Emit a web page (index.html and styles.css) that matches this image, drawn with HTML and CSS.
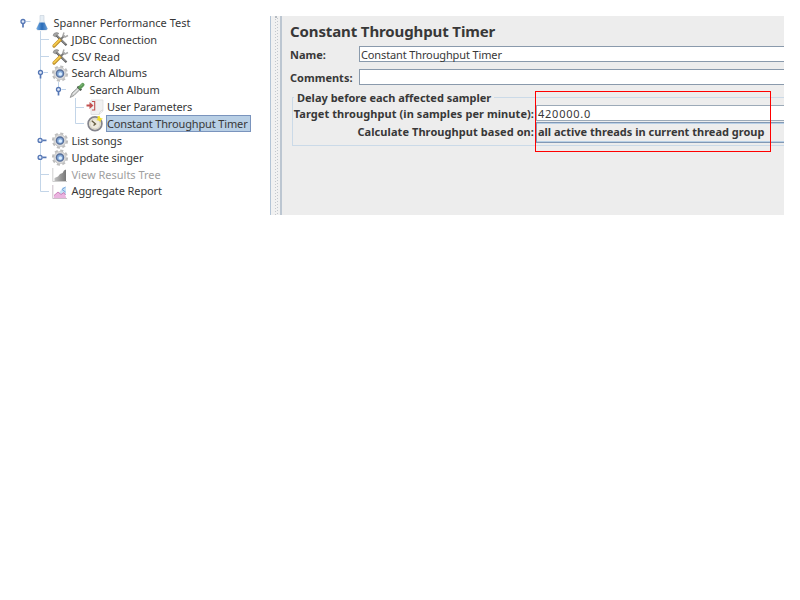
FILE: index.html
```html
<!DOCTYPE html>
<html lang="en">
<head>
<meta charset="utf-8">
<title>Spanner Performance Test</title>
<link rel="stylesheet" href="styles.css">
</head>
<body>
<svg class="defs" width="0" height="0">
  <defs>
    <linearGradient id="flaskFill" x1="0" x2="1"><stop offset="0" stop-color="#70a9e2"/><stop offset=".5" stop-color="#286bb8"/><stop offset="1" stop-color="#6a9ed5"/></linearGradient>
    <linearGradient id="chartFill" x1="0" x2="1"><stop offset="0" stop-color="#c0c0c0"/><stop offset="1" stop-color="#777"/></linearGradient>
    <g id="open"><path d="M0 9.5V13.500" stroke="#5577b5" stroke-width="1.700"/><circle cy="7.500" r="2" fill="#e4ecfa" stroke="#5577b5" stroke-width="1.300"/><path d="M3 7.500H7.500" stroke="#bfd2e8"/></g>
    <g id="closed"><path d="M2 8.400H6" stroke="#5577b5" stroke-width="1.700"/><circle cx="-.4" cy="8.400" r="2" fill="#e4ecfa" stroke="#5577b5" stroke-width="1.300"/></g>
    <g id="flask"><path d="M4 1.500V7L.8 14.200Q.5 16 2 16H10Q11.500 16 11.100 14.200L8 7V1.500Z" fill="#e6eef5" stroke="#c2ced9" stroke-width=".6"/><path d="M3.500 8.500H8.500L11.300 14.200Q11.600 15.900 10 15.900H2Q.5 15.900 .7 14.200Z" fill="url(#flaskFill)"/></g>
    <g id="tools"><path d="M4 4L14.500 14.300" stroke="#555" stroke-width="2.200"/><path d="M4 3.500L14 13.500" stroke="#ddd" stroke-width=".7"/><path d="M1 4.500Q1.500 1.500 5 1.500L7 2.500L4.500 4L3.500 6Z" fill="#a5a5a5" stroke="#777" stroke-width=".5"/><path d="M2 15L8.500 8.500" stroke="#b88924" stroke-width="3.200" stroke-linecap="round"/><path d="M2 14.600L8 8.600" stroke="#f5ca4c" stroke-width="1.900" stroke-linecap="round"/><path d="M8.500 8.500L12.500 4.500" stroke="#777" stroke-width="1.800"/><path d="M12 1.500L11 4.500L13 6L16 4.500" fill="none" stroke="#aaa" stroke-width="1.500"/></g>
    <g id="gear"><circle cx="8" cy="8.600" r="7.100" fill="none" stroke="#bdbdbd" stroke-width="2" stroke-dasharray="3.100 2.477"/><circle cx="8" cy="8.600" r="6.100" fill="#dadada" stroke="#bcbcbc" stroke-width=".7"/><circle cx="8" cy="8.600" r="3.600" fill="#83aada" stroke="#586f99" stroke-width="1.300"/><circle cx="8.300" cy="9" r="1.800" fill="#dceeff"/></g>
    <g id="dropper"><path d="M1.200 15.500L3 11L9.500 5L11.500 7L5 13.500Z" fill="#c9cccb" stroke="#8b8b8b" stroke-width=".8"/><path d="M4 12.300L9.500 7" stroke="#f5f5f5"/><path d="M8.500 4.500L12.300 8.300" stroke="#454d46" stroke-width="2"/><path d="M11 5.500L13.700 2.800" stroke="#5d9b58" stroke-width="3.700" stroke-linecap="round"/><path d="M11.500 4L13.500 2.200" stroke="#93c78a"/></g>
    <g id="params"><path d="M4 1H16V12L12 15.500H4Z" fill="#f1f1f1" stroke="#d8d8d8" stroke-width=".7"/><path d="M16 11Q13 11 12 15.500" fill="#fff" stroke="#c8c8c8" stroke-width=".7"/><path d="M-.5 5.500H2.500V3L6.500 6.500L2.500 10V7.500H-.500Z" fill="#c2504f"/><path d="M5 2.500H7.700V11H5" fill="none" stroke="#c2504f" stroke-width="1.100"/></g>
    <g id="clock"><circle cx="8" cy="8.800" r="6.900" fill="#eeeade" stroke="#84848c" stroke-width="1.700"/><circle cx="8" cy="8.800" r="5.100" fill="none" stroke="#ccc8b8" stroke-width=".7"/><path d="M4.800 5.800L8.500 9L6.500 10.500" fill="none" stroke="#655c40" stroke-width="1.300"/><path d="M12.500 .8L13.400 3L16 3.700L13.900 4.900L13.500 7.200L11.800 5.500L9.500 5.300L10.800 3.500L10.300 1.500Z" fill="#f4df28"/></g>
    <g id="results"><path d="M.8 2V15.500H15" fill="none" stroke="#c3c3c3" stroke-width=".8"/><path d="M2.500 15V12L6 10.500L8 8L10.500 7L12 4.500L14 3.500V15Z" fill="url(#chartFill)"/></g>
    <g id="report"><path d="M.8 2V15.500H15" fill="none" stroke="#bdaebb" stroke-width=".8"/><path d="M7 10L11 4H14V12H9Z" fill="#c7e2f5"/><path d="M2 15V12.500L6 9L9 11.500L12 9.500L14 14V15Z" fill="#eab3df"/><path d="M2 12.500L6 9L9 11.500L12 9.500L13.500 12" fill="none" stroke="#c56cae" stroke-width=".8"/><path d="M13.500 4L10 6.500L13.500 9" fill="none" stroke="#78a3dc"/></g>
  </defs>
</svg>
<main class="window">
  <nav class="tree">
    <div class="row"><svg class="gutter root" viewBox="16 0 37.500 17"><use href="#open" x="23"/><use href="#flask" x="36"/></svg><span class="wide">Spanner Performance Test</span></div>
    <div class="row"><svg class="gutter l1" viewBox="16 0 55.500 17"><path class="line" d="M40.500 0V17M40.500 8.500H49"/><use href="#tools" x="52"/></svg><span>JDBC Connection</span></div>
    <div class="row"><svg class="gutter l1" viewBox="16 0 55.500 17"><path class="line" d="M40.500 0V17M40.500 8.500H49"/><use href="#tools" x="52"/></svg><span class="wide">CSV Read</span></div>
    <div class="row"><svg class="gutter l1" viewBox="16 0 55.500 17"><path class="line" d="M40.500 0V17"/><use href="#open" x="40.500"/><use href="#gear" x="52"/></svg><span>Search Albums</span></div>
    <div class="row"><svg class="gutter l2" viewBox="16 0 73.500 17"><path class="line" d="M40.500 0V17M58.500 0V6"/><use href="#open" x="58.500"/><use href="#dropper" x="69"/></svg><span>Search Album</span></div>
    <div class="row"><svg class="gutter l3" viewBox="16 0 91 17"><path class="line" d="M40.500 0V17M75.500 -1V17M75.500 8.500H84"/><use href="#params" x="87"/></svg><span>User Parameters</span></div>
    <div class="row"><svg class="gutter l3" viewBox="16 0 91 17"><path class="line" d="M40.500 0V17M75.500 0V8.500H84"/><use href="#clock" x="87"/></svg><span class="selected">Constant Throughput Timer</span></div>
    <div class="row"><svg class="gutter l1" viewBox="16 0 55.500 17"><path class="line" d="M40.500 0V17"/><use href="#closed" x="40.500"/><use href="#gear" x="52"/></svg><span>List songs</span></div>
    <div class="row"><svg class="gutter l1" viewBox="16 0 55.500 17"><path class="line" d="M40.500 0V17"/><use href="#closed" x="40.500"/><use href="#gear" x="52"/></svg><span>Update singer</span></div>
    <div class="row"><svg class="gutter l1" viewBox="16 0 55.500 17"><path class="line" d="M40.500 0V17M40.500 8.500H49"/><use href="#results" x="52"/></svg><span class="wide disabled">View Results Tree</span></div>
    <div class="row"><svg class="gutter l1" viewBox="16 0 55.500 17"><path class="line" d="M40.500 0V8.500H49"/><use href="#report" x="52"/></svg><span>Aggregate Report</span></div>
  </nav>
  <div class="divider"></div>
  <section class="panel">
    <h1>Constant Throughput Timer</h1>
    <div class="field"><label>Name:</label><div class="input">Constant Throughput Timer</div></div>
    <div class="field"><label>Comments:</label><div class="input"></div></div>
    <div class="group">
      <div class="legend"><span>Delay before each affected sampler</span></div>
      <div class="setting target"><label>Target throughput (in samples per minute):</label><div class="value">420000.0</div></div>
      <div class="setting mode"><label>Calculate Throughput based on:</label><div class="combo">all active threads in current thread group</div></div>
      <div class="highlight"></div>
    </div>
  </section>
</main>
</body>
</html>
```
FILE: styles.css
```css
* { box-sizing: border-box; }
body { margin: 0; background: #fff; color: #383838; font: 11px/16px "Noto Sans", sans-serif; }
.defs { position: absolute; }
.window { display: flex; width: 768px; height: 199px; margin: 16px; }
.tree { width: 254px; margin-top: -1.5px; flex: none; }
.row { display: flex; height: 16.85px; align-items: center; white-space: nowrap; letter-spacing: -.1px; }
.wide { letter-spacing: 0; }
.gutter { height: 17px; overflow: visible; flex: none; }
.root { width: 37.5px; }
.l1 { width: 55.5px; }
.l2 { width: 73.5px; }
.l3 { width: 91px; }
.line { fill: none; stroke: #c3d5e8; }
.selected { width: 145px; height: 17px; line-height: 15px; background: #b8cfe5; border: 1px solid #7a94bd; margin-left: -1px; letter-spacing: -.14px; }
.disabled { color: #a0a0a0; }
.divider { width: 12px; flex: none; border-left: 1px solid #b3c4d6; border-right: 2px solid #bcc6d1; background: radial-gradient(circle at 1px 1px, #b4bac1 .7px, transparent 1px) 4px 0 / 3px 3px no-repeat, repeating-linear-gradient(0deg, #c4c8cd 0 1px, transparent 1px 3px) 4px 0 / 1px 100% no-repeat, repeating-linear-gradient(0deg, transparent 0 1px, #c4c8cd 1px 2px, transparent 2px 3px) 6px 0 / 1px 100% no-repeat, #f1f1f1; }
.panel { flex: 1; min-width: 0; background: #ededed; padding: 6px 0 0 8px; font-weight: 700; white-space: nowrap; overflow: hidden; }
h1 { margin: 0; height: 24px; font-size: 15px; line-height: 18px; letter-spacing: -.12px; }
.field { display: flex; height: 16px; margin-bottom: 7px; }
.field label { width: 69px; flex: none; line-height: 17px; }
.input { flex: 1; height: 16px; background: #fff; border: 1px solid #8a9aac; border-right: 0; padding-left: 1px; font-weight: 400; line-height: 15px; letter-spacing: -.13px; }
.group { position: relative; height: 49px; margin: 12px 0 0 2px; border: 1px solid #cbdae8; border-right: 0; }
.legend { height: 9px; margin-top: -8px; padding-left: 1px; line-height: 15px; }
.legend span { background: #ededed; padding: 0 3px; }
.setting { display: flex; }
.setting label { width: 243px; padding-right: 2px; flex: none; text-align: right; letter-spacing: .07px; }
.target { height: 16px; margin-top: 6px; line-height: 17px; }
.value { flex: 1; background: #fff; border: 1px solid #9caab8; border-right: 0; font-weight: 400; padding-left: 1px; line-height: 15px; letter-spacing: .75px; }
.mode { height: 21px; margin-top: 1px; line-height: 20px; }
.combo { flex: 1; border: 1px solid #8298b4; border-right: 0; box-shadow: inset 0 1px #b8cfe5, inset 0 -1px #b8cfe5; padding-left: 1px; line-height: 18px; }
.highlight { position: absolute; left: 242px; top: -7px; width: 236px; height: 61px; border: 1px solid #f00; }
```
